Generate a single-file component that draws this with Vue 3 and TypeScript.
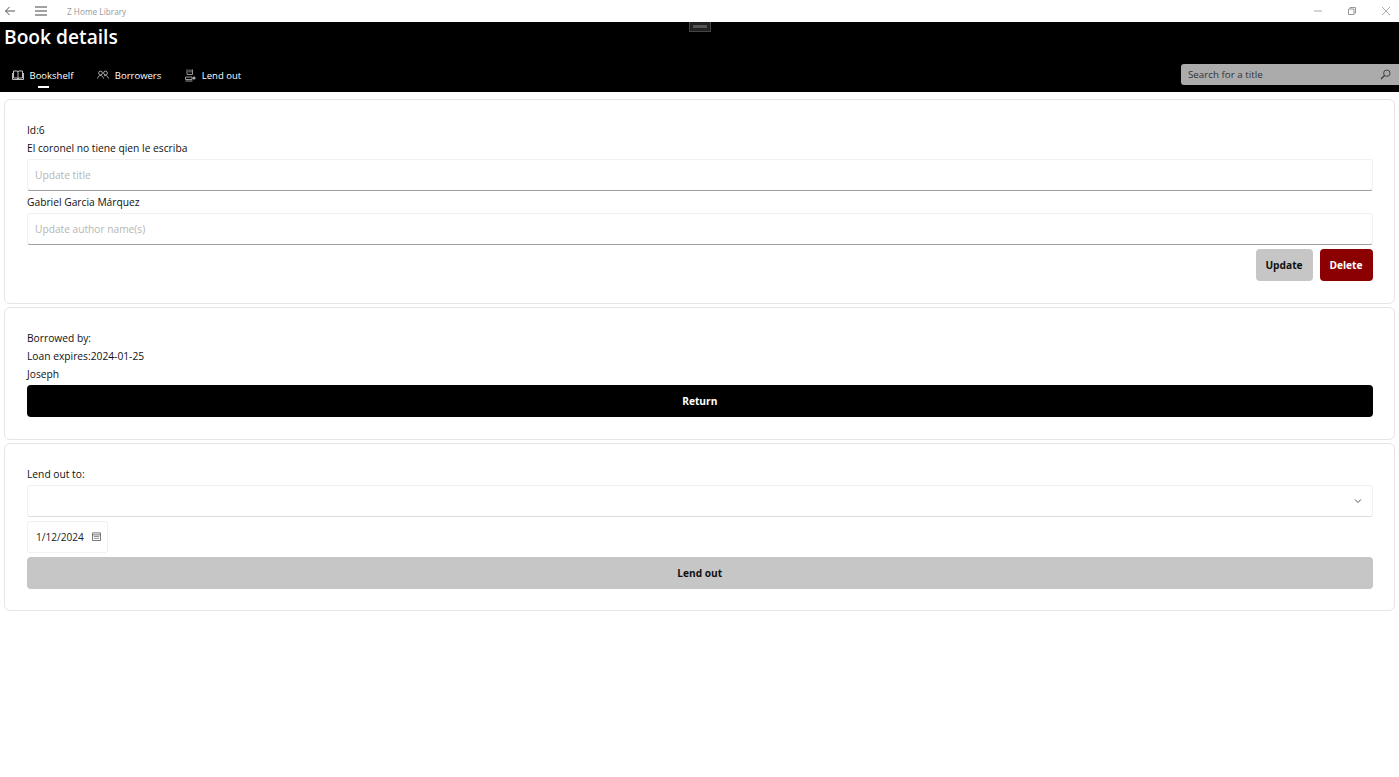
<script setup lang="ts">
const tabs: { label: string; icon: string; active?: boolean }[] = [
  { label: 'Bookshelf', icon: 'book', active: true },
  { label: 'Borrowers', icon: 'people' },
  { label: 'Lend out', icon: 'lend' },
]
</script>

<template>
  <div class="app">
    <div class="titlebar">
      <svg class="back" width="12" height="12" viewBox="0 0 12 12"><path d="M11 6H1.500M5.500 2 1.500 6l4 4" fill="none" stroke="#555" stroke-width="1"/></svg>
      <svg class="burger" width="12" height="10" viewBox="0 0 12 10"><path d="M0 1h12M0 5h12M0 9h12" stroke="#444" stroke-width="1"/></svg>
      <span class="app-name">Z Home Library</span>
      <div class="win-controls">
        <svg width="10" height="10" viewBox="0 0 10 10"><path d="M1 5h8" stroke="#aaa"/></svg>
        <svg width="10" height="10" viewBox="0 0 10 10"><path d="M1.500 3h5.500v5.500H1.500zM3 3V1.500h5.500V7H7" fill="none" stroke="#999"/></svg>
        <svg width="10" height="10" viewBox="0 0 10 10"><path d="M1 1l8 8M9 1l-8 8" stroke="#aaa"/></svg>
      </div>
    </div>

    <header class="header">
      <div class="handle"><span></span></div>
      <h1>Book details</h1>
      <div class="nav-row">
        <nav class="tabs">
          <div v-for="t in tabs" :key="t.label" class="tab" :class="{ active: t.active }">
            <svg v-if="t.icon === 'book'" width="12" height="11" viewBox="0 0 12 11"><path d="M1.500 1h3.500Q6 1 6 2 6 1 7 1h3.500v7H7Q6 8 6 9 6 8 5 8H1.500zM6 2v7M.5 3v6.500h11V3" fill="none" stroke="#eee" stroke-width=".8"/></svg>
            <svg v-else-if="t.icon === 'people'" width="12" height="10" viewBox="0 0 12 10"><circle cx="3.500" cy="3" r="1.900" fill="none" stroke="#ccc" stroke-width=".8"/><circle cx="8.500" cy="3" r="1.900" fill="none" stroke="#ccc" stroke-width=".8"/><path d="M.5 8.500C1 6.500 2.200 5.500 3.500 5.500s2.500 1 3 3M7 5.800c.4-.2 1-.3 1.500-.3 1.300 0 2.500 1 3 3" fill="none" stroke="#ccc" stroke-width=".8"/></svg>
            <svg v-else width="11" height="13" viewBox="0 0 11 13"><path d="M2 .5v5h5.500v-5M4 .5v3M6 .5v3" fill="none" stroke="#bbb" stroke-width=".8"/><path d="M.5 8h6.500v2.500H.5zM.5 12h7" fill="none" stroke="#aaa" stroke-width=".9"/><circle cx="9" cy="9" r="1.600" fill="#aaa"/></svg>
            <span>{{ t.label }}</span>
            <i v-if="t.active" class="underline"></i>
          </div>
        </nav>
        <div class="search">
          <span>Search for a title</span>
          <svg width="11" height="11" viewBox="0 0 11 11"><circle cx="6.800" cy="4.200" r="3.200" fill="none" stroke="#333" stroke-width=".9"/><path d="M4.500 6.500 1 10" stroke="#333" stroke-width="1.100"/></svg>
        </div>
      </div>
    </header>

    <main class="content">
      <section class="card first">
        <p class="line">Id:6</p>
        <p class="line">El coronel no tiene qien le escriba</p>
        <div class="input underlined">Update title</div>
        <p class="line between">Gabriel Garcia Márquez</p>
        <div class="input underlined">Update author name(s)</div>
        <div class="actions">
          <button class="btn grey small">Update</button>
          <button class="btn red small">Delete</button>
        </div>
      </section>

      <section class="card second">
        <p class="line">Borrowed by:</p>
        <p class="line">Loan expires:2024-01-25</p>
        <p class="line">Joseph</p>
        <button class="btn black wide">Return</button>
      </section>

      <section class="card third">
        <p class="line">Lend out to:</p>
        <div class="select">
          <svg width="8" height="6" viewBox="0 0 8 6"><path d="M1 1.500 4 4.500l3-3" fill="none" stroke="#555" stroke-width="1"/></svg>
        </div>
        <div class="date">
          <span>1/12/2024</span>
          <svg width="9" height="9" viewBox="0 0 10 10"><path d="M.5 1h9v8.500h-9zM.5 3.200h9" fill="none" stroke="#555" stroke-width=".9"/><path d="M2 5h6M2 7h6" stroke="#888" stroke-width="1"/></svg>
        </div>
        <button class="btn grey wide">Lend out</button>
      </section>
    </main>
  </div>
</template>

<style>
html, body { margin: 0; background: #fff; }
</style>

<style scoped>
.app {
  width: 1399px;
  height: 777px;
  overflow: hidden;
  background: #fff;
  font-family: "Open Sans", "Noto Sans", sans-serif;
  color: #111;
}
.titlebar {
  height: 22px;
  display: flex;
  align-items: center;
  padding-left: 4px;
  box-sizing: border-box;
}
.back { margin-right: 19px; }
.burger { margin-right: 20px; }
.app-name { font-size: 8.250px; color: #999; }
.win-controls {
  margin-left: auto;
  display: flex;
  gap: 24px;
  padding-right: 8px;
}
.header {
  position: relative;
  height: 70px;
  background: #000;
  color: #fff;
  box-sizing: border-box;
  padding-top: 3px;
}
.handle {
  position: absolute;
  left: 689px;
  top: 0;
  width: 22px;
  height: 10px;
  box-sizing: border-box;
  border: 1px solid #444;
  border-top: 0;
  background: #222;
  display: flex;
  align-items: center;
  justify-content: center;
}
.handle span { width: 14px; height: 3px; background: #555; }
h1 {
  margin: 0 0 0 4px;
  font-size: 19.200px;
  line-height: 24px;
  font-weight: 600;
}
.nav-row {
  display: flex;
  justify-content: space-between;
  align-items: flex-end;
  margin-top: 14px;
}
.tabs { display: flex; padding-left: 12px; gap: 24px; }
.tab {
  position: relative;
  display: flex;
  align-items: center;
  gap: 5.500px;
  height: 24px;
  font-size: 9.500px;
}
.underline {
  position: absolute;
  left: 26px;
  bottom: -1px;
  width: 11px;
  height: 2px;
  background: #fff;
}
.search {
  width: 218px;
  height: 21px;
  margin-bottom: 2px;
  box-sizing: border-box;
  background: #ababab;
  border-radius: 3px 0 0 3px;
  display: flex;
  align-items: center;
  justify-content: space-between;
  padding: 0 8px 0 7px;
  font-size: 9.800px;
  color: #333;
}
.content {
  display: flex;
  flex-direction: column;
  gap: 3px;
  padding: 7px 4px 0 4px;
}
.card {
  box-sizing: border-box;
  border: 1.500px solid #e6e6e6;
  border-radius: 6px;
  padding: 21px 21.500px 21px 22px;
  display: flex;
  flex-direction: column;
}
.first { height: 205px; }
.second { height: 133px; }
.third { height: 168px; }
.line {
  margin: 0;
  font-size: 10.250px;
  line-height: 18px;
  color: #111;
}
.between { margin: 2px 0; }
.input {
  height: 32px;
  margin-top: 2px;
  box-sizing: border-box;
  border: 1px solid #f1f1f1;
  border-radius: 3px;
  padding: 0 7px;
  display: flex;
  align-items: center;
  font-size: 10.200px;
  color: #b5b5b5;
}
.between + .input { margin-top: 0; }
.underlined { border-bottom: 1.500px solid #a0a0a0; }
.actions {
  display: flex;
  justify-content: flex-end;
  gap: 7px;
  margin-top: 4px;
}
.btn {
  border: 0;
  border-radius: 4px;
  height: 32px;
  padding: 0;
  font: 700 10.200px "Open Sans", "Noto Sans", sans-serif;
}
.small { width: 57px; }
.small.red { width: 53px; }
.wide { width: 100%; }
.grey { background: #c6c6c6; color: #111; }
.red { background: #8b0000; color: #fff; }
.black { background: #000; color: #fff; margin-top: 2px; }
.select {
  height: 32px;
  box-sizing: border-box;
  border: 1px solid #f1f1f1;
  border-bottom: 1px solid #dcdcdc;
  border-radius: 3px;
  display: flex;
  align-items: center;
  justify-content: flex-end;
  padding-right: 10px;
  margin-top: 2px;
}
.date {
  width: 81px;
  height: 32px;
  margin: 4px 0;
  box-sizing: border-box;
  border: 1px solid #f1f1f1;
  border-radius: 3px;
  display: flex;
  align-items: center;
  justify-content: space-between;
  padding: 0 6px 1px 8px;
  font-size: 10.100px;
  color: #222;
}
</style>
